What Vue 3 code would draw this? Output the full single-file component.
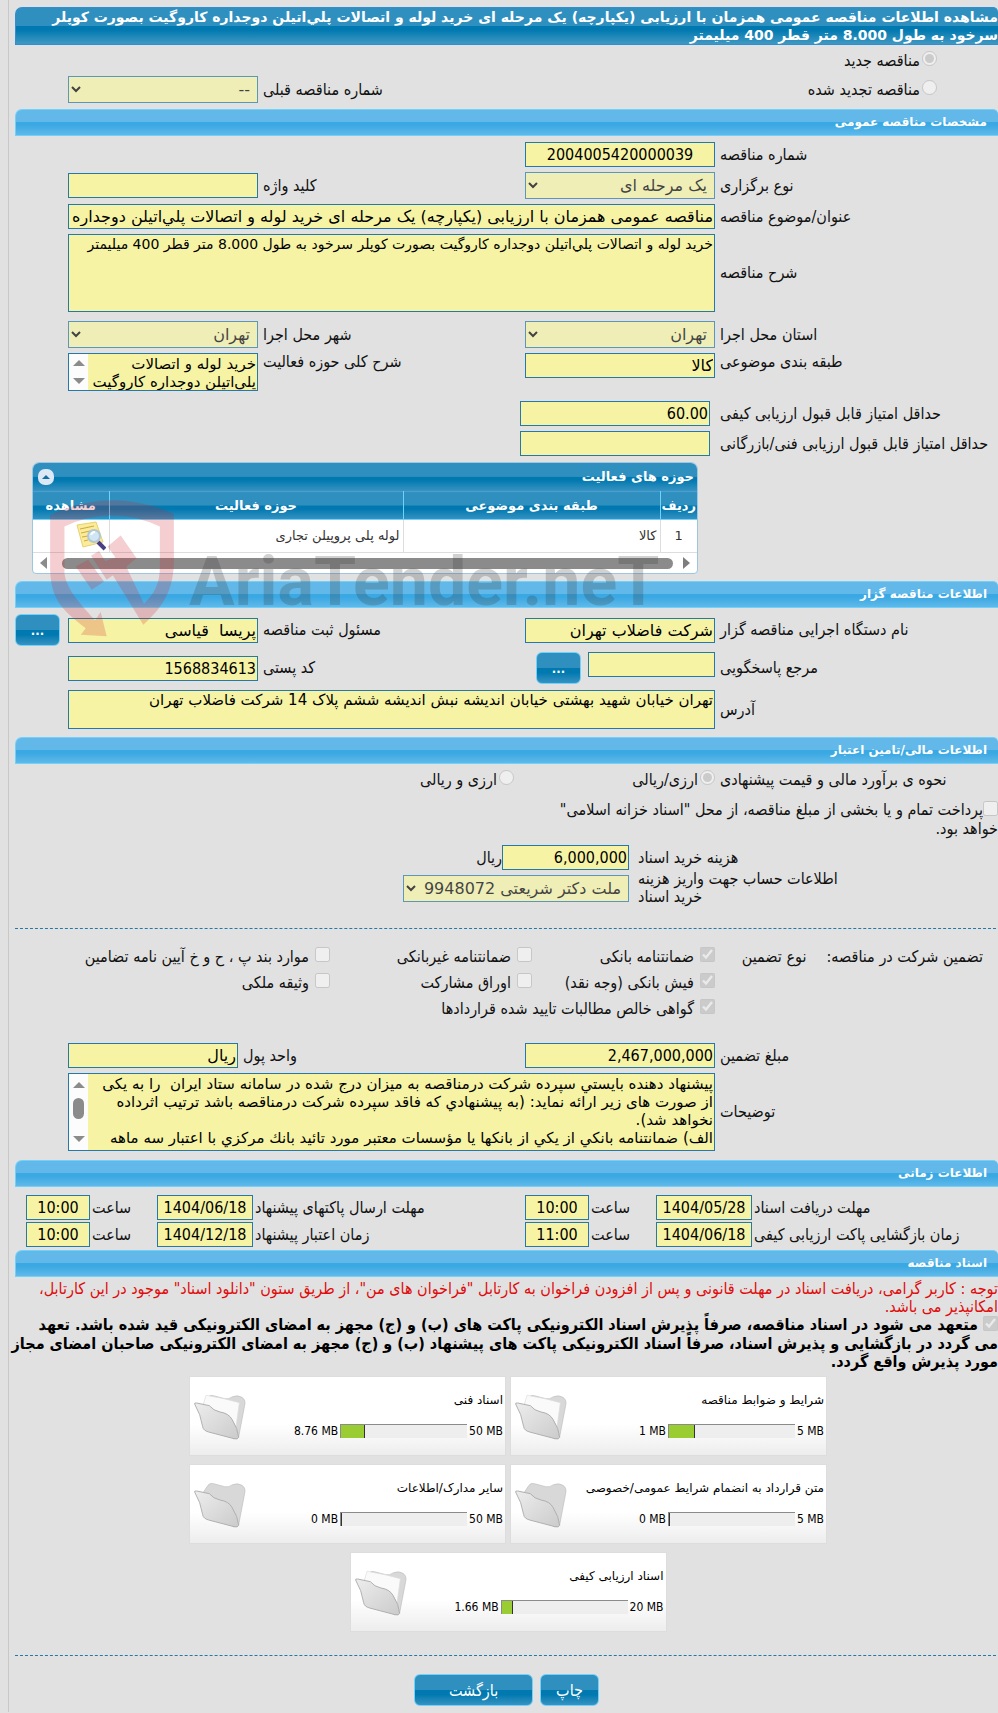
<script setup>
    import { ref } from "vue"

    const title = "مشاهده اطلاعات مناقصه عمومی همزمان با ارزیابی (یکپارچه) یک مرحله ای خرید لوله و اتصالات پلي‌اتیلن دوجداره کاروگیت بصورت کوپلر سرخود به طول 8.000 متر قطر 400 میلیمتر"
    const tenderKind = ref("new")
    const currency = ref("single")
    const subject = ref("مناقصه عمومی همزمان با ارزیابی (یکپارچه) یک مرحله ای خرید لوله و اتصالات پلي‌اتیلن دوجداره کاروگیت بصورت کوپلر سرخود")
    const description = ref("خرید لوله و اتصالات پلي‌اتیلن دوجداره کاروگیت بصورت کوپلر سرخود به طول 8.000 متر قطر 400 میلیمتر")
    const activity = ref("خرید لوله و اتصالات\nپلي‌اتیلن دوجداره کاروگیت")
    const address = ref("تهران خیابان شهید بهشتی خیابان اندیشه نبش اندیشه ششم پلاک 14 شرکت فاضلاب تهران")
    const notes = ref("پیشنهاد دهنده بایستي سپرده شرکت درمناقصه به میزان درج شده در سامانه ستاد ایران  را به یکی\nاز صورت های زیر ارائه نماید: (به پیشنهادي که فاقد سپرده شرکت درمناقصه باشد ترتیب اثرداده\nنخواهد شد).\nالف) ضمانتنامه بانکي از یکي از بانکها یا مؤسسات معتبر مورد تائید بانك مرکزي با اعتبار سه ماهه")

    const guarantees = [
        { label: "ضمانتنامه بانکی", checked: true },
        { label: "ضمانتنامه غیربانکی", checked: false },
        { label: "موارد بند پ ، ح و خ آیین نامه تضامین", checked: false },
        { label: "فیش بانکی (وجه نقد)", checked: true },
        { label: "اوراق مشارکت", checked: false },
        { label: "وثیقه ملکی", checked: false },
        { label: "گواهی خالص مطالبات تایید شده قراردادها", checked: true, wide: true },
    ]
    const times = [
        { label: "مهلت دریافت اسناد", date: "1404/05/28", time: "10:00" },
        { label: "مهلت ارسال پاکتهای پیشنهاد", date: "1404/06/18", time: "10:00" },
        { label: "زمان بازگشایی پاکت ارزیابی کیفی", date: "1404/06/18", time: "11:00" },
        { label: "زمان اعتبار پیشنهاد", date: "1404/12/18", time: "10:00" },
    ]
    const files = [
        { name: "شرایط و ضوابط مناقصه", max: "5 MB", used: "1 MB", percent: 21 },
        { name: "اسناد فنی", max: "50 MB", used: "8.76 MB", percent: 19 },
        { name: "متن قرارداد به انضمام شرایط عمومی/خصوصی", max: "5 MB", used: "0 MB", percent: 0 },
        { name: "سایر مدارک/اطلاعات", max: "50 MB", used: "0 MB", percent: 0 },
        { name: "اسناد ارزیابی کیفی", max: "20 MB", used: "1.66 MB", percent: 9 },
    ]
</script>

<template>
    <main class="page" dir="rtl">
        <h1 class="title">{{ title }}</h1>

        <div class="kind">
            <label class="choice"><input type="radio" value="new" v-model="tenderKind" disabled>مناقصه جدید</label>
            <div class="grid kindRow">
                <label class="choice"><input type="radio" value="renewed" v-model="tenderKind" disabled>مناقصه تجدید شده</label>
                <label class="lbl c3" for="prev">شماره مناقصه قبلی</label>
                <select id="prev" disabled><option>--</option></select>
            </div>
        </div>

        <h2 class="bar">مشخصات مناقصه عمومی</h2>
        <section class="form">
            <div class="grid">
                <label class="lbl" for="no">شماره مناقصه</label>
                <input id="no" class="field num center" value="2004005420000039" readonly>
            </div>
            <div class="grid">
                <label class="lbl" for="type">نوع برگزاری</label>
                <select id="type" disabled><option>یک مرحله ای</option></select>
                <label class="lbl" for="key">کلید واژه</label>
                <input id="key" class="field" readonly>
            </div>
            <div class="grid">
                <label class="lbl" for="subject">عنوان/موضوع مناقصه</label>
                <input id="subject" class="field span" v-model="subject" readonly>
            </div>
            <div class="grid">
                <label class="lbl" for="desc">شرح مناقصه</label>
                <textarea id="desc" class="field span tall" v-model="description" readonly></textarea>
            </div>
            <div class="grid place">
                <label class="lbl" for="state">استان محل اجرا</label>
                <select id="state" disabled><option>تهران</option></select>
                <label class="lbl" for="city">شهر محل اجرا</label>
                <select id="city" disabled><option>تهران</option></select>
            </div>
            <div class="grid top">
                <label class="lbl" for="cat">طبقه بندی موضوعی</label>
                <input id="cat" class="field" value="کالا" readonly>
                <label class="lbl" for="act">شرح کلی حوزه فعالیت</label>
                <div class="scrollBox short">
                    <textarea id="act" v-model="activity" readonly></textarea>
                    <div class="vscroll"><i class="up"></i><i class="down"></i></div>
                </div>
            </div>
            <div class="grid score">
                <label class="lbl" for="min1">حداقل امتیاز قابل قبول ارزیابی کیفی</label>
                <input id="min1" class="field num" value="60.00" readonly>
            </div>
            <div class="grid score">
                <label class="lbl" for="min2">حداقل امتیاز قابل قبول ارزیابی فنی/بازرگانی</label>
                <input id="min2" class="field num" readonly>
            </div>
        </section>

        <div class="stamped">
            <div class="panel">
                <div class="panelTitle">
                    <span>حوزه های فعالیت</span>
                    <button class="collapse" aria-label="بستن"><i class="up"></i></button>
                </div>
                <table>
                    <thead>
                        <tr>
                            <th class="colNo">ردیف</th>
                            <th class="colCat">طبقه بندی موضوعی</th>
                            <th>حوزه فعالیت</th>
                            <th class="colView">مشاهده</th>
                        </tr>
                    </thead>
                    <tbody>
                        <tr>
                            <td class="mid">1</td>
                            <td>کالا</td>
                            <td>لوله پلی پروپیلن تجاری</td>
                            <td>
                                <svg class="note" viewBox="0 0 30 30" width="30" height="30">
                                    <path d="M1 4 L20 1 L27 21 L7 26 Z" fill="#fbeb9a" stroke="#e6d271" />
                                    <path d="M4 8 L18 5 M5 12 L14 10 M6 16 L12 15 M8 20 L12 19" stroke="#c9ac3c" />
                                    <path d="M22 21 L29 28" stroke="#4a3f86" stroke-width="4" />
                                    <circle cx="18" cy="15" r="6" fill="#cfe6f5" stroke="#b4c6d3" stroke-width="2" />
                                    <path d="M15 14 Q16 11 19 11" stroke="#fff" stroke-width="2" fill="none" />
                                </svg>
                            </td>
                        </tr>
                    </tbody>
                </table>
                <div class="hscroll"><i class="right"></i><span></span><i class="left"></i></div>
            </div>
            <h2 class="bar">اطلاعات مناقصه گزار</h2>
            <div class="stamp" dir="ltr">
                <svg viewBox="150 150 372 412" width="124" height="137">
                    <path fill="#d0242e" d="M150 195 Q335 108 522 192 V340 C520 430 480 480 430 525 L313 335 L363 317 L432 462 C465 430 480 400 480 350 V230 Q335 162 193 230 V370 C200 425 250 470 285 512 L302 487 L320 560 L242 555 L257 536 C200 490 152 460 150 360 Z" />
                    <path fill="#d0242e" d="M323 290 L362 257 L410 325 L370 357 Z M273 318 L297 303 L341 375 L320 390 Z M227 350 L264 330 L312 395 L275 420 Z" />
                </svg>
                <span>AriaTender.neT</span>
            </div>
        </div>

        <section class="owner">
            <div class="grid">
                <label class="lbl" for="org">نام دستگاه اجرایی مناقصه گزار</label>
                <input id="org" class="field" value="شرکت فاضلاب تهران" readonly>
                <label class="lbl" for="person">مسئول ثبت مناقصه</label>
                <input id="person" class="field" value="پریسا  قیاسی" readonly>
                <button class="btn dots edge">...</button>
            </div>
            <div class="grid">
                <label class="lbl" for="resp">مرجع پاسخگویی</label>
                <div class="pair">
                    <input id="resp" class="field" readonly>
                    <button class="btn dots">...</button>
                </div>
                <label class="lbl" for="post">کد پستی</label>
                <input id="post" class="field num" value="1568834613" readonly>
            </div>
            <div class="grid">
                <label class="lbl" for="addr">آدرس</label>
                <textarea id="addr" class="field span address" v-model="address" readonly></textarea>
            </div>
        </section>

        <h2 class="bar">اطلاعات مالی/تامین اعتبار</h2>
        <section class="money">
            <div class="currency">
                <span class="lbl">نحوه ی برآورد مالی و قیمت پیشنهادی</span>
                <label class="choice"><input type="radio" value="single" v-model="currency" disabled>ارزی/ریالی</label>
                <label class="choice"><input type="radio" value="both" v-model="currency" disabled>ارزی و ریالی</label>
            </div>
            <label class="treasury"><input type="checkbox" disabled>پرداخت تمام و یا بخشی از مبلغ مناقصه، از محل "اسناد خزانه اسلامی"<br>خواهد بود.</label>
            <div class="cost">
                <label class="lbl" for="cost">هزینه خرید اسناد</label>
                <input id="cost" class="field num" value="6,000,000" readonly>
                <span>ریال</span>
            </div>
            <div class="cost">
                <label class="lbl" for="acc">اطلاعات حساب جهت واریز هزینه<br>خرید اسناد</label>
                <select id="acc" disabled><option>ملت دکتر شریعتی 9948072</option></select>
            </div>
        </section>

        <hr>

        <div class="guarantee">
            <div class="guaranteeHead"><span>تضمین شرکت در مناقصه:</span><span>نوع تضمین</span></div>
            <div class="checks">
                <label v-for="(item, index) in guarantees" :key="index" class="choice" :class="{ wide: item.wide }">
                    <input type="checkbox" :checked="item.checked" disabled>{{ item.label }}
                </label>
            </div>
        </div>

        <section class="form amount">
            <div class="grid">
                <label class="lbl" for="amount">مبلغ تضمین</label>
                <input id="amount" class="field num" value="2,467,000,000" readonly>
                <label class="lbl unitLbl" for="unit">واحد پول</label>
                <input id="unit" class="field unit" value="ریال" readonly>
            </div>
            <div class="grid">
                <label class="lbl" for="notes">توضیحات</label>
                <div class="scrollBox span tall">
                    <textarea id="notes" v-model="notes" readonly></textarea>
                    <div class="vscroll"><i class="up"></i><b></b><i class="down"></i></div>
                </div>
            </div>
        </section>

        <h2 class="bar">اطلاعات زمانی</h2>
        <div class="times">
            <div class="timeRow" v-for="(row, index) in times" :key="index">
                <label class="lbl" :for="'date' + index">{{ row.label }}</label>
                <input :id="'date' + index" class="field num center" :value="row.date" readonly>
                <label class="lbl" :for="'time' + index">ساعت</label>
                <input :id="'time' + index" class="field num center" :value="row.time" readonly>
            </div>
        </div>

        <h2 class="bar">اسناد مناقصه</h2>
        <p class="warning">توجه : کاربر گرامی، دریافت اسناد در مهلت قانونی و پس از افزودن فراخوان به کارتابل "فراخوان های من"، از طریق ستون "دانلود اسناد" موجود در این کارتابل،<br>امکانپذیر می باشد.</p>
        <label class="pledge"><input type="checkbox" checked disabled> متعهد می شود در اسناد مناقصه، صرفاً پذیرش اسناد الکترونیکی پاکت های (ب) و (ج) مجهز به امضای الکترونیکی قید شده باشد. تعهد<br>می گردد در بازگشایی و پذیرش اسناد، صرفاً اسناد الکترونیکی پاکت های پیشنهاد (ب) و (ج) مجهز به امضای الکترونیکی صاحبان امضای مجاز<br>مورد پذیرش واقع گردد.</label>

        <div class="files">
            <div class="file" v-for="(file, index) in files" :key="index">
                <div class="fileInfo">
                    <div>{{ file.name }}</div>
                    <div class="quota">
                        <bdi>{{ file.max }}</bdi>
                        <div class="meter"><div class="fill" :style="{ width: file.percent + '%' }"></div></div>
                        <bdi>{{ file.used }}</bdi>
                    </div>
                </div>
                <svg class="folder" viewBox="0 0 156 138" width="52" height="46">
                    <defs>
                        <linearGradient :id="'front' + index" x1="0" y1="0" x2="1" y2="1">
                            <stop offset="0" stop-color="#ededed" />
                            <stop offset="1" stop-color="#cbcbcb" />
                        </linearGradient>
                    </defs>
                    <path d="M22 40 L42 10 Q46 2 58 5 L92 14 Q104 17 116 8 Q132 2 144 10 Q156 18 152 34 L134 128 Q130 137 118 134 Z" fill="#d8d8d8" stroke="#bdbdbd" stroke-width="2" />
                    <path v-if="file.percent" d="M26 38 L36 4 L90 14 L136 26 L126 100 L100 62 Z" fill="#fafafa" stroke="#dcdcdc" stroke-width="2" />
                    <path d="M2 30 Q0 26 8 27 L46 35 Q58 50 78 54 Q104 58 114 76 Q132 104 134 130 Q132 137 120 134 L44 114 Q28 110 26 98 Q20 60 2 30 Z" :fill="'url(#front' + index + ')'" stroke="#b0b0b0" stroke-width="3" />
                </svg>
            </div>
        </div>

        <hr>
        <div class="actions">
            <button class="btn">چاپ</button>
            <button class="btn back">بازگشت</button>
        </div>
    </main>
</template>

<style>
    body {
        background-color: #e1e1e1;
        overflow-x: hidden;
    }
</style>

<style scoped>
    * {
        box-sizing: border-box;
    }

    .page {
        margin-left: 8px;
        padding: 7px 0 6px 6px;
        border-left: 1px solid #c8c8c8;
        font-family: "DejaVu Sans Condensed", "DejaVu Sans", sans-serif;
        font-size: 16px;
        line-height: 18px;
        color: #111;
    }

    .title {
        margin: 0;
        border: 1px solid #2f8fd0;
        border-right: 0;
        border-radius: 7px 5px 0 0;
        background: linear-gradient(#2f90c0 0, #2f90c0 50%, #0078b0 50%, #0078b0 60%, #3f98c2 100%);
        color: #fff;
        font-family: "DejaVu Sans", sans-serif;
        font-size: 14px;
        line-height: 18px;
    }

    .bar {
        margin: 0;
        height: 27px;
        padding: 0 11px;
        border: 1px solid #70d2fa;
        border-right: 0;
        border-radius: 7px 5px 0 0;
        background: linear-gradient(#62b9e9 0, #62b9e9 48%, #3aa8e2 50%, #3aa8e2 60%, #60b9ea 100%);
        color: #fff;
        font-family: "DejaVu Sans", sans-serif;
        font-size: 12px;
        line-height: 25px;
    }

    .grid {
        display: grid;
        grid-template-columns: 283px 190px 1fr 190px 53px;
        align-items: center;
    }

    .lbl {
        padding-left: 5px;
        text-align: left;
        white-space: nowrap;
    }

    .choice {
        display: flex;
        align-items: center;
        gap: 2px;
        white-space: nowrap;
    }

    input[type="radio"],
    input[type="checkbox"] {
        width: 15px;
        height: 15px;
        margin: 0 0 4px;
    }

    .field,
    .scrollBox {
        width: 100%;
        height: 25px;
        margin: 0;
        padding: 0 1px;
        border: 1px solid #2479a9;
        border-radius: 0;
        background-color: #f6f4a4;
        color: #000;
        font-family: "DejaVu Sans", sans-serif;
        font-size: 16px;
        outline: none;
        resize: none;
    }

    select {
        width: 100%;
        height: 27px;
        padding: 0 3px;
        border: 1px solid #2479a9;
        border-radius: 0;
        background-color: #f6f4a4;
        color: #000;
        font-family: "DejaVu Sans", sans-serif;
        font-size: 16px;
        opacity: 0.7;
    }

    .num {
        font-family: inherit;
    }

    textarea.field {
        display: block;
        font-size: 14px;
        line-height: 18px;
        white-space: pre;
        overflow: hidden;
    }

    textarea.address {
        height: 39px;
        font-size: 15px;
    }

    .center {
        text-align: center;
    }

    .span {
        grid-column: 2 / 5;
    }

    .field.tall,
    .scrollBox.tall {
        height: 78px;
    }

    .kind {
        padding: 6px 0;
    }

    .kind .choice {
        padding-right: 61px;
    }

    .kindRow {
        margin-top: 6px;
    }

    .c3 {
        grid-column: 3;
    }

    .form {
        display: flex;
        flex-direction: column;
        gap: 5px;
        padding: 6px 0;
    }

    .place {
        margin-top: 4px;
    }

    .top {
        align-items: start;
    }

    .score {
        grid-template-columns: 288px 190px;
    }

    .score .lbl {
        padding-left: 10px;
    }

    .top + .score {
        margin-top: 5px;
    }

    .scrollBox {
        display: flex;
        padding: 0;
    }

    .scrollBox.short {
        height: 38px;
    }

    .scrollBox textarea {
        flex: 1;
        min-width: 0;
        padding: 1px;
        border: 0;
        background: none;
        color: #000;
        font-family: inherit;
        font-size: 15px;
        line-height: 18px;
        white-space: pre;
        overflow: hidden;
        resize: none;
        outline: none;
    }

    .vscroll {
        display: flex;
        flex-direction: column;
        align-items: center;
        justify-content: space-between;
        width: 19px;
        padding: 6px 0;
        background-color: #fcfcfc;
    }

    .tall .vscroll {
        padding: 8px 0;
    }

    .vscroll b {
        width: 11px;
        height: 21px;
        margin-bottom: 8px;
        border-radius: 6px;
        background-color: #8b8b8b;
    }

    .up,
    .down {
        border: 6px solid transparent;
        border-top-width: 0;
        border-bottom: 6px solid #8b8b8b;
    }

    .down {
        border-top: 6px solid #8b8b8b;
        border-bottom-width: 0;
    }

    .stamped {
        position: relative;
    }

    .panel {
        width: 666px;
        margin: 0 auto 7px 17px;
        border: 1px solid #9cc6e2;
        border-radius: 7px 7px 4px 4px;
        background-color: #fff;
        font-family: "DejaVu Sans", sans-serif;
        font-size: 13px;
        overflow: hidden;
    }

    .panelTitle,
    th {
        background: linear-gradient(#2f90c0 0, #2f90c0 48%, #0078b0 50%, #0078b0 60%, #3893c0 100%);
        color: #fff;
        font-weight: bold;
    }

    .panelTitle {
        display: flex;
        align-items: center;
        justify-content: space-between;
        height: 28px;
        padding: 0 3px 0 5px;
    }

    .collapse {
        display: flex;
        align-items: center;
        justify-content: center;
        width: 16px;
        height: 16px;
        padding: 0;
        border: 0;
        border-radius: 7px;
        background-color: #dde8f6;
    }

    .collapse .up {
        border-width: 0 4px 4px;
        border-bottom-color: #0f6fa0;
    }

    table {
        width: 100%;
        border-collapse: collapse;
        table-layout: fixed;
    }

    th {
        height: 28px;
        padding: 0;
        border-left: 1px solid #70d2fa;
        border-top: 1px solid #4a9fd0;
        border-bottom: 1px solid #70d2fa;
    }

    td {
        height: 33px;
        padding: 0 3px;
        border-left: 1px solid #ddd;
        border-bottom: 1px solid #ddd;
        color: #333;
    }

    th:last-child,
    td:last-child {
        border-left: 0;
    }

    .mid {
        text-align: center;
    }

    .colNo {
        width: 37px;
    }

    .colCat {
        width: 257px;
    }

    .colView {
        width: 76px;
    }

    .note {
        display: block;
    }

    .hscroll {
        display: flex;
        align-items: center;
        gap: 10px;
        height: 20px;
        padding: 0 7px;
    }

    .hscroll span {
        flex: 1;
        height: 11px;
        margin-left: 5px;
        border-radius: 6px;
        background-color: #8b8b8b;
    }

    .left,
    .right {
        border: 6px solid transparent;
        border-left: 7px solid #7d7d7d;
        border-right-width: 0;
    }

    .left {
        border-right: 7px solid #8b8b8b;
        border-left-width: 0;
    }

    .stamp {
        position: absolute;
        left: 35px;
        top: 38px;
        display: flex;
        align-items: flex-end;
        gap: 15px;
        opacity: 0.22;
        pointer-events: none;
    }

    .stamp span {
        margin-bottom: 15px;
        color: #333;
        font-family: Roboto, "Liberation Sans", sans-serif;
        font-size: 68px;
        font-weight: bold;
        line-height: 80px;
    }

    .owner {
        padding: 6px 0 8px;
    }

    .owner .grid {
        margin-bottom: 6px;
    }

    .owner .grid:last-child {
        margin-bottom: 0;
    }

    .pair {
        display: flex;
        gap: 7px;
    }

    .pair .field {
        width: 127px;
    }

    .btn {
        height: 32px;
        padding: 0 15px;
        border: 1px solid #70d2fa;
        border-radius: 6px;
        background: linear-gradient(#2f90c0 0, #2f90c0 50%, #0078b0 50%, #0078b0 65%, #3893c0 100%);
        color: #fff;
        font-family: inherit;
        font-size: 16px;
    }

    .dots {
        width: 45px;
        padding: 0;
        font-size: 13px;
        font-weight: bold;
    }

    .edge {
        justify-self: end;
    }

    .money {
        padding-top: 6px;
    }

    .currency {
        display: grid;
        grid-template-columns: 283px 201px auto;
        align-items: center;
    }

    .treasury {
        display: block;
        margin: 12px 0 7px;
    }

    .treasury input,
    .pledge input {
        vertical-align: middle;
    }

    .cost {
        display: grid;
        grid-template-columns: 369px auto auto 1fr;
        align-items: center;
    }

    .cost .lbl {
        padding-left: 9px;
    }

    .cost .field {
        width: 127px;
    }

    .cost select {
        width: 226px;
    }

    hr {
        margin: 22px 2px 18px 0;
        border: 0;
        border-top: 1px dashed #2479a9;
    }

    .guarantee {
        display: flex;
        min-height: 76px;
    }

    .guaranteeHead {
        display: flex;
        gap: 20px;
        flex: 0 0 283px;
        padding: 1px 15px;
        white-space: nowrap;
    }

    .checks {
        display: grid;
        grid-template-columns: 183px 202px auto;
        row-gap: 7px;
        align-content: start;
    }

    .checks .choice {
        gap: 6px;
    }

    .wide {
        grid-column: 1 / 4;
    }

    .amount {
        padding: 20px 0 9px;
    }

    .unit {
        width: 170px;
        justify-self: end;
    }

    .unitLbl {
        margin-left: -20px;
    }

    .times {
        display: grid;
        grid-template-columns: 473px 1fr;
        gap: 2px 0;
        padding: 8px 0 3px;
    }

    .timeRow {
        display: grid;
        grid-template-columns: 1fr 96px 67px 64px;
        align-items: center;
    }

    .timeRow:nth-child(even) {
        padding-left: 11px;
    }

    .timeRow .lbl {
        padding-left: 2px;
    }

    .warning {
        margin: 3px 0 0;
        color: #e00b0b;
        white-space: nowrap;
    }

    .pledge {
        display: block;
        font-weight: bold;
        color: #000;
        white-space: nowrap;
    }

    .files {
        display: flex;
        flex-wrap: wrap;
        justify-content: center;
        gap: 8px 4px;
        width: 638px;
        margin: 5px auto 0 174px;
    }

    .file {
        display: flex;
        width: 317px;
        height: 80px;
        padding: 0 2px 0 4px;
        border: 1px solid #ddd;
        background: linear-gradient(#fff 60%, #ededed);
        color: #000;
        font-family: "DejaVu Sans", sans-serif;
        font-size: 12px;
    }

    .fileInfo {
        flex: 1;
        padding-top: 14px;
    }

    .quota {
        display: flex;
        align-items: center;
        gap: 2px;
        margin-top: 13px;
        font-family: "DejaVu Sans Condensed", "DejaVu Sans", sans-serif;
    }

    .meter {
        display: flex;
        width: 127px;
        height: 14px;
        border-top: 1px solid #8b8b8b;
        border-left: 1px solid #8b8b8b;
        background-color: #eee;
        direction: ltr;
    }

    .fill {
        border-right: 1px solid #333;
        background-color: #9acd32;
    }

    .folder {
        margin-top: 17px;
    }

    .files + hr {
        margin-top: 23px;
    }

    .actions {
        display: flex;
        justify-content: center;
        gap: 7px;
    }

    .back {
        width: 119px;
    }
</style>
